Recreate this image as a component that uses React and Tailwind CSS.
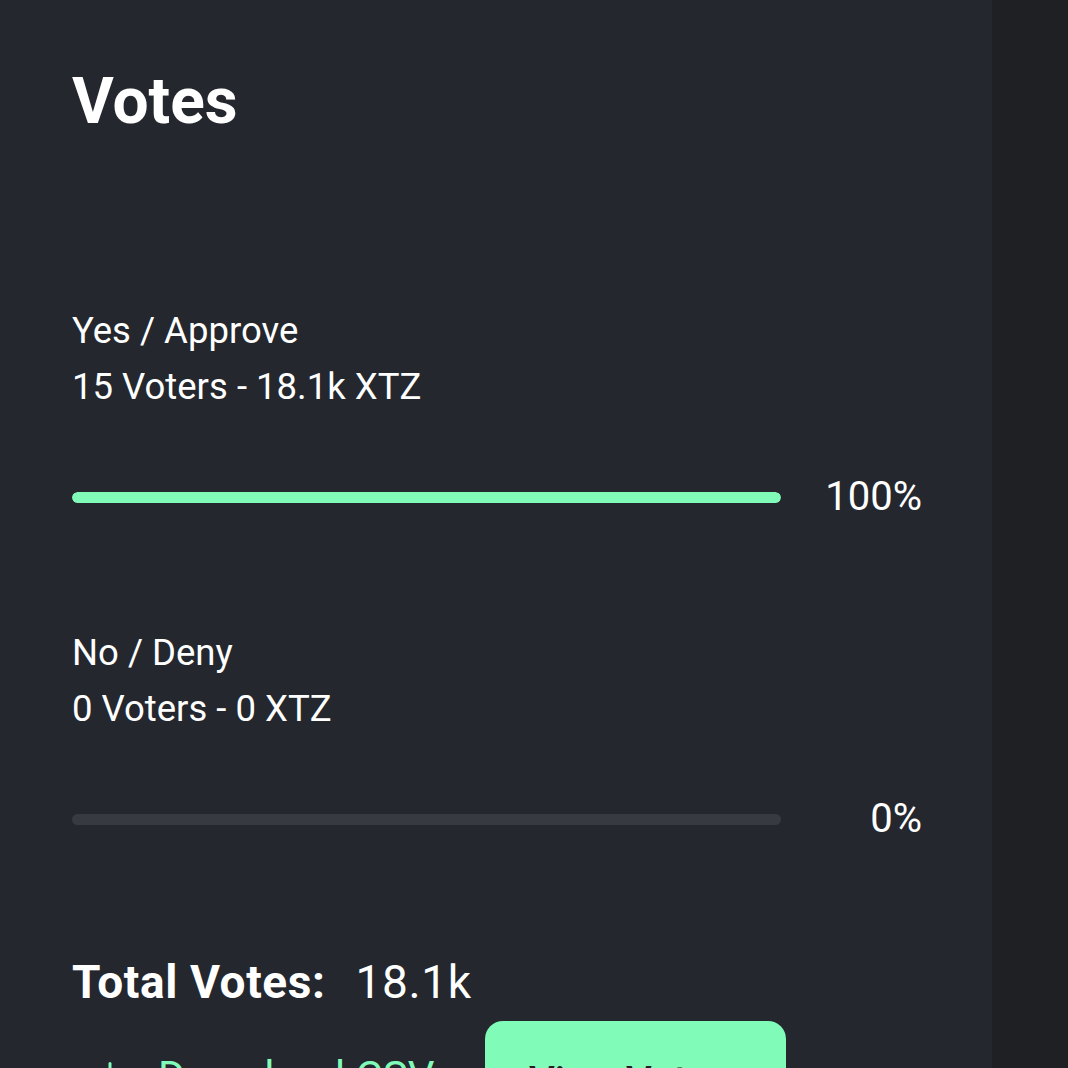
import React from 'react';

const results = [
    { label: 'Yes / Approve', voters: 15, amount: '18.1k', pct: 100 },
    { label: 'No / Deny', voters: 0, amount: '0', pct: 0 },
];

const DownloadIcon = () => (
    <svg width="36" height="36" viewBox="0 0 24 24" fill="none" stroke="currentColor" strokeWidth="2" strokeLinecap="round" strokeLinejoin="round">
        <path d="M12 3v12" />
        <path d="m7 10 5 5 5-5" />
        <path d="M21 15v4a2 2 0 0 1-2 2H5a2 2 0 0 1-2-2v-4" />
    </svg>
);

const VoteRow = ({ label, voters, amount, pct }) => (
    <div className="flex flex-col">
        <div className="text-[36.5px] leading-[56px] text-white">
            <div>{label}</div>
            <div>{voters} Voters - {amount} XTZ</div>
        </div>
        <div className="mt-[54px] flex items-center">
            <div className="h-[11px] w-[709px] rounded-full bg-[#373a41] overflow-hidden">
                <div className="h-full rounded-full bg-[#80fcb8]" style={{ width: `${pct}%` }} />
            </div>
            <div className="flex-1 text-right text-[40px] leading-[56px] text-white">{pct}%</div>
        </div>
    </div>
);

export default function App() {
    return (
        <div className="h-[1068px] w-full overflow-hidden bg-[#1f2023] font-['Roboto',sans-serif]">
            <div className="h-full w-[992px] bg-[#24272e] pl-[72px] pr-[70px] pt-[70px]">
                <h1 className="text-[64px] leading-[64px] font-bold text-white">Votes</h1>

                <div className="mt-[169px] flex flex-col gap-[100px]">
                    {results.map((r) => (
                        <VoteRow key={r.label} {...r} />
                    ))}
                </div>

                <div className="mt-[107px] flex items-baseline gap-[30px] text-[46px] leading-[56px] text-white">
                    <span className="font-bold tracking-[0.6px]">Total Votes:</span>
                    <span className="tracking-[0.6px]">18.1k</span>
                </div>

                <div className="mt-[11px] flex items-start">
                    <a className="mt-[34px] flex w-[413px] items-center gap-[30px] pl-[20px] text-[42px] leading-[44px] text-[#80fcb8]">
                        <DownloadIcon />
                        <span className="whitespace-nowrap">Download CSV</span>
                    </a>
                    <button className="flex h-[100px] w-[301px] items-start rounded-[18px] bg-[#80fcb8] px-[44px] pt-[39px] text-left text-[40px] leading-[44px] font-medium whitespace-nowrap text-[#1f2023]">
                        View Votes
                    </button>
                </div>
            </div>
        </div>
    );
}
